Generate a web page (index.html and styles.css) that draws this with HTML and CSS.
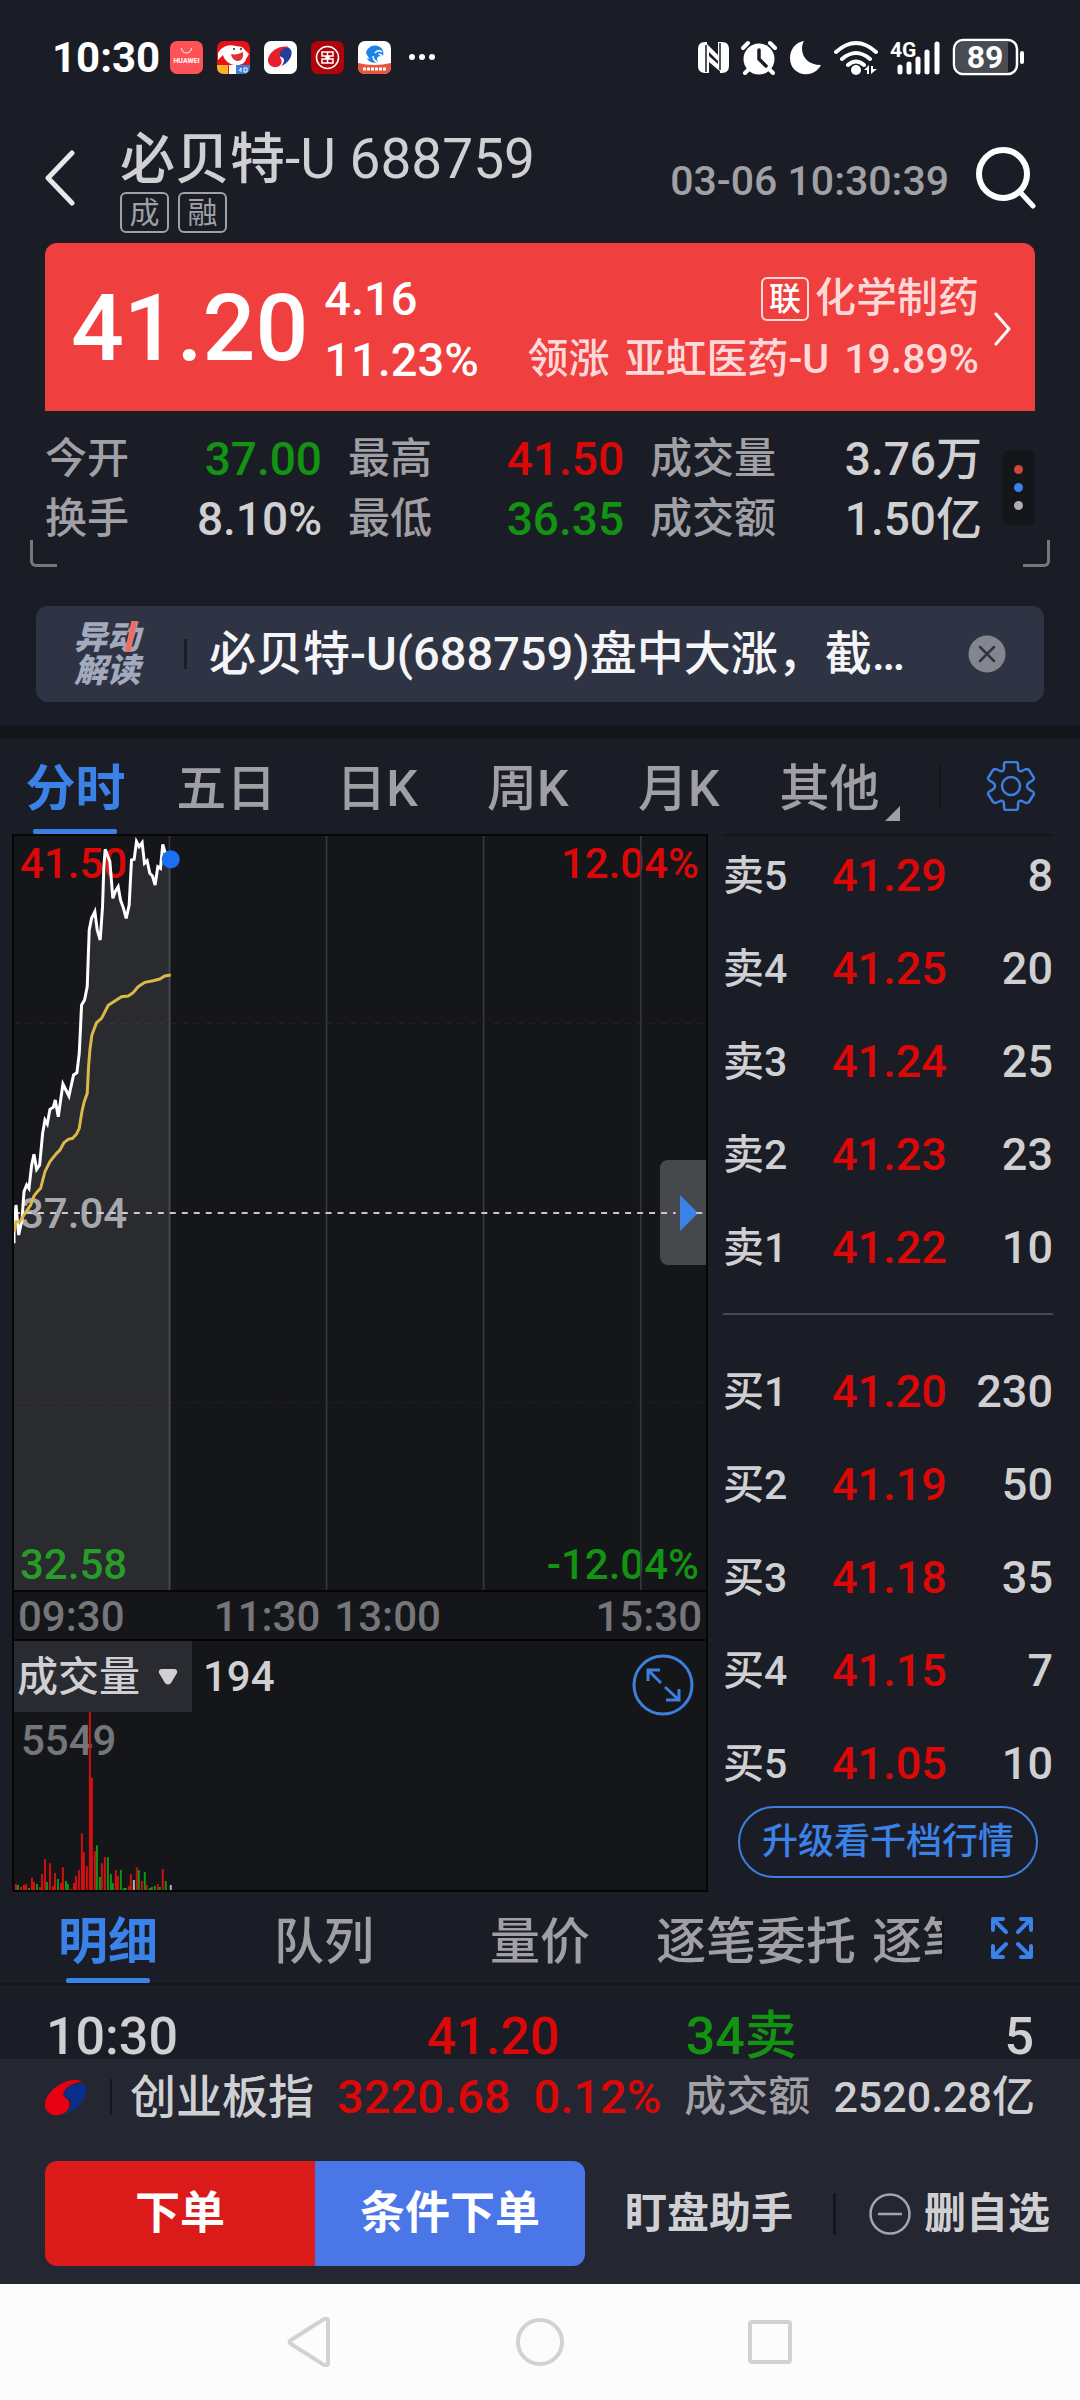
FILE: index.html
```html
<!DOCTYPE html>
<html lang="zh-CN">
<head>
    <meta charset="UTF-8">
    <meta name="viewport" content="width=device-width, initial-scale=1.0">
    <title>必贝特-U 688759</title>
    <link rel="stylesheet" href="styles.css">
</head>
<body>
    <div class="status-bar">
        <span class="clock">10:30</span>
        <div class="app-icons">
            <svg width="33" height="33" viewBox="0 0 33 33">
                <rect width="33" height="33" rx="7" fill="#ff5257"/>
                <path d="M11.500 7a5 5 0 0 0 10 0" fill="none" stroke="#fff" stroke-width="1"/>
                <text x="16.500" y="22" class="huawei-text">HUAWEI</text>
            </svg>
            <svg width="33" height="33" viewBox="0 0 33 33">
                <rect width="33" height="33" rx="7" fill="#e8131a"/>
                <path d="M1 12C5 5 12 3 19 5c4 1 6 0 8 3l5 5-3 5c-1 5-7 7-12 6S7 19 6 14l-5 5z" fill="#fff"/>
                <path d="M14 13c4 1 8 0 12-2 1 6-2 9-5 9s-6-2-7-7z" fill="#d33"/>
                <circle cx="17" cy="8" r="1" fill="#222"/>
                <circle cx="24" cy="8" r="1" fill="#222"/>
                <path d="M0 24h11v9H7q-7 0-7-7z" fill="#f7b22c"/>
                <path d="M12 24h7v9h-7z" fill="#fff"/>
                <path d="M19 24h14v2q0 7-7 7h-7z" fill="#3a7fd9"/>
                <path d="M22 30l2-3v4M27 27h3v4h-3z" fill="none" stroke="#fff"/>
            </svg>
            <svg width="33" height="33" viewBox="0 0 33 33">
                <rect width="33" height="33" rx="7" fill="#fff"/>
                <path d="M25 6C17 4 6 9 4 18c-1 8 9 11 13 5 2-4-1-5-1-8 0-4 5-7 9-9z" fill="#e6202c"/>
                <path d="M16 12c1-4 6-6 9-5 4 2 3 8 0 12-2 3-5 5-8 6 3-3 4-6 2-8-2-1-4-2-3-5z" fill="#21409a"/>
            </svg>
            <svg width="33" height="33" viewBox="0 0 33 33">
                <rect width="33" height="33" rx="7" fill="#b0040c"/>
                <circle cx="16.500" cy="16.500" r="11" fill="none" stroke="#fff" stroke-width="1.500"/>
                <path d="M11 11h11v4h-4v3h4v4H11v-4h4v-3h-4zM16.500 11v11" fill="none" stroke="#fff" stroke-width="1.500"/>
            </svg>
            <svg width="33" height="33" viewBox="0 0 33 33">
                <rect width="33" height="33" rx="7" fill="#fff"/>
                <path d="M0 22q16 4 33 0v4q0 7-7 7H7q-7 0-7-7z" fill="#e8553a"/>
                <path d="M8 12c1-6 8-10 14-6 3 2 4 6 3 9-1-2-3-3-5-2l3 2c-4 0-5 3-3 6-6 2-10-1-11-4l3 1c-2-2-3-4-4-6z" fill="#1c84e8"/>
                <path d="M17 12q3-4 7-1M15 15q0 4 4 6" fill="none" stroke="#fff" stroke-width="1.500"/>
                <path d="M5 28h23" stroke="#fff" stroke-width="3" stroke-dasharray="3 1"/>
            </svg>
        </div>
        <svg class="more-dots" width="28" height="8" viewBox="0 0 28 8" fill="#fff">
            <circle cx="4" cy="4" r="3"/><circle cx="14" cy="4" r="3"/><circle cx="24" cy="4" r="3"/>
        </svg>
        <div class="system-icons">
            <svg width="31" height="33" viewBox="0 0 31 33">
                <path d="M7 1h2v31H7q-7 0-7-7V8q0-7 7-7zM24 32h-2V1h2q7 0 7 7v17q0 7-7 7z" fill="#fff"/>
                <path d="M7 1l13 13v6L11 11v21H8V1zM24 32L11 21v-6l9 8V1h3z" fill="#fff"/>
                <path d="M8 4v27M22 2v27" stroke="#1b1d26" stroke-width="1.500"/>
            </svg>
            <svg width="36" height="35" viewBox="0 0 36 35">
                <circle cx="18" cy="19" r="15.500" fill="#fff"/>
                <path d="M2 8l5-5M34 8l-5-5M8 29l-4 4M28 29l4 4" stroke="#fff" stroke-width="4" stroke-linecap="round"/>
                <path d="M18 10v9l7 7" fill="none" stroke="#1b1d26" stroke-width="3.500" stroke-linecap="round"/>
            </svg>
            <svg width="33" height="35" viewBox="0 0 33 35">
                <path d="M15 1C10 9 14 25 32 25 24 40 1 36 1 18 1 9 7 2 15 1z" fill="#fff"/>
            </svg>
            <svg width="44" height="35" viewBox="0 0 44 35">
                <path d="M2 12q20-18 40 0M8 19q14-12 28 0M14 25q8-7 16 0" fill="none" stroke="#fff" stroke-width="4" stroke-linecap="round"/>
                <circle cx="22" cy="30" r="5" fill="#fff"/>
                <path d="M30 30l5-5v9h-2v-4zM37 26v8l6-5h-4v-3z" fill="#fff"/>
            </svg>
            <svg width="50" height="35" viewBox="0 0 50 35">
                <text x="0" y="17" class="net-text">4G</text>
                <path d="M10 27v5M19 24v8M28 19v13M37 12v20M47 4v28" stroke="#fff" stroke-width="5" stroke-linecap="round"/>
            </svg>
            <svg width="74" height="38" viewBox="0 0 74 38">
                <rect x="2" y="2" width="63" height="34" rx="9" fill="none" stroke="#fff" stroke-width="2.500"/>
                <path d="M11 4h45v30H11q-7 0-7-7V11q0-7 7-7z" fill="#4a4c54"/>
                <path d="M70 15v9" stroke="#fff" stroke-width="4" stroke-linecap="round"/>
                <text x="33" y="30" class="battery-text">89</text>
            </svg>
        </div>
    </div>

    <header class="header">
        <button class="icon-button" aria-label="返回">
            <svg width="30" height="56" viewBox="0 0 30 56">
                <path d="M27 3L3 28l24 25" fill="none" stroke="#e8e8e8" stroke-width="5" stroke-linecap="round" stroke-linejoin="round"/>
            </svg>
        </button>
        <div class="stock">
            <h1>必贝特<span class="code">-U 688759</span></h1>
            <div class="badges">
                <span class="badge">成</span>
                <span class="badge">融</span>
            </div>
        </div>
        <time class="quote-time">03-06 10:30:39</time>
        <button class="icon-button" aria-label="搜索">
            <svg width="60" height="62" viewBox="0 0 60 62">
                <circle cx="27" cy="27" r="24" fill="none" stroke="#fff" stroke-width="6"/>
                <path d="M44 45l13 14" stroke="#fff" stroke-width="5" stroke-linecap="round"/>
            </svg>
        </button>
    </header>

    <section class="price-card">
        <span class="price">41.20</span>
        <div class="change">
            <span>4.16</span>
            <span>11.23%</span>
        </div>
        <a class="sector" href="#">
            <span class="sector-line"><span class="sector-badge">联</span>化学制药</span>
            <span class="sector-line sector-lead"><span>领涨</span><span>亚虹医药-U</span><span>19.89%</span></span>
        </a>
        <svg width="18" height="34" viewBox="0 0 18 34">
            <path d="M2 2l13 15L2 32" fill="none" stroke="#fff" stroke-width="3" stroke-linecap="round" stroke-linejoin="round"/>
        </svg>
    </section>

    <section class="stats">
        <dl class="stat-grid">
            <dt>今开</dt><dd class="down">37.00</dd>
            <dt>最高</dt><dd class="up">41.50</dd>
            <dt>成交量</dt><dd>3.76万</dd>
            <dt>换手</dt><dd>8.10%</dd>
            <dt>最低</dt><dd class="down">36.35</dd>
            <dt>成交额</dt><dd>1.50亿</dd>
        </dl>
        <button class="more-button" aria-label="更多">
            <i class="dot dot-red"></i>
            <i class="dot dot-blue"></i>
            <i class="dot dot-grey"></i>
        </button>
    </section>
    <div class="corners"><i class="corner corner-left"></i><i class="corner corner-right"></i></div>

    <section class="notice">
        <span class="notice-logo">异动<br>解读<i class="notice-slash"></i></span>
        <span class="notice-text">必贝特-U(688759)盘中大涨，截…</span>
        <button class="icon-button" aria-label="关闭">
            <svg width="38" height="38" viewBox="0 0 38 38">
                <circle cx="19" cy="19" r="18.500" fill="#83868e"/>
                <path d="M12 12l14 14M26 12L12 26" stroke="#2f3444" stroke-width="2.500" stroke-linecap="round"/>
            </svg>
        </button>
    </section>

    <nav class="period-tabs">
        <button class="tab active">分时</button>
        <button class="tab">五日</button>
        <button class="tab">日K</button>
        <button class="tab">周K</button>
        <button class="tab">月K</button>
        <button class="tab tab-more">其他</button>
        <button class="tool-button" aria-label="设置">
            <svg width="50" height="50" viewBox="0 0 50 50" fill="none" stroke="#3d7fdc" stroke-width="2.500" stroke-linejoin="round">
                <path d="M20 1h10q2 0 2 3v3q0 4 4 3l4-2q2 0 3 1l5 8q0 2-2 3-5 2-5 5t5 5q2 1 2 3l-5 8q-1 1-3 1l-4-2q-4-1-4 3v3q0 3-2 3H20q-2 0-2-3v-3q0-4-4-3l-4 2q-2 0-3-1l-5-8q0-2 2-3 5-2 5-5t-5-5q-2-1-2-3l5-8q1-1 3-1l4 2q4 1 4-3V4q0-3 2-3z"/>
                <circle cx="25" cy="25" r="9"/>
            </svg>
        </button>
    </nav>

    <main class="market">
        <div class="charts">
            <div class="price-chart">
                <span class="mark mark-high up">41.50</span>
                <span class="mark mark-high-rate up">12.04%</span>
                <span class="mark mark-mid">37.04</span>
                <span class="mark mark-low down">32.58</span>
                <span class="mark mark-low-rate down">-12.04%</span>
                <button class="side-handle" aria-label="收起盘口">
                    <svg width="18" height="36" viewBox="0 0 18 36"><path d="M0 0l18 18L0 36z" fill="#3b82e8"/></svg>
                </button>
                <svg class="plot" viewBox="42 48 2079 2262" preserveAspectRatio="none">
                    <path d="M509 48V2310M981 48V2310M1453 48V2310M1925 48V2310" stroke="#363741" stroke-width="5"/>
                    <path d="M42 610H2121M42 1748H2121" stroke="#232429" stroke-width="3" stroke-dasharray="18 18"/>
                    <path d="M42 1179H2030M2092 1179H2110" stroke="#c8c8ca" stroke-width="6" stroke-dasharray="18 18"/>
                    <path class="plot-area" d="M42 1270L48 1155 56 1245 66 1200 72 1115 80 1095 87 1105 95 1035 102 1003 110 1048 119 1035 128 940 135 900 142 912 150 868 160 862 166 840 175 890 189 792 207 828 221 765 231 758 238 700 241 640 245 555 254 540 262 500 268 330 275 295 285 275 292 330 301 360 308 260 312 140 316 88 330 125 339 235 346 215 355 200 362 240 371 265 379 295 388 255 395 120 403 118 410 65 418 80 427 68 434 130 442 122 450 160 458 168 466 195 474 140 482 145 489 73 495 95 513 118V2310H42z"/>
                    <polyline class="plot-price" points="42,1270 42,1235 48,1155 56,1245 66,1200 72,1115 80,1095 87,1105 95,1035 102,1003 110,1048 119,1035 128,940 135,900 142,912 150,868 160,862 166,840 175,890 189,792 207,828 221,765 231,758 238,700 241,640 245,555 254,540 262,500 268,330 275,295 285,275 292,330 301,360 308,260 312,140 316,88 330,125 339,235 346,215 355,200 362,240 371,265 379,295 388,255 395,120 403,118 410,65 418,80 427,68 434,130 442,122 450,160 458,168 466,195 474,140 482,145 489,73 495,95 513,118"/>
                    <polyline class="plot-average" points="42,1235 48,1205 60,1205 75,1180 92,1155 102,1128 112,1115 122,1105 135,1055 150,1025 170,1000 180,990 192,968 205,958 218,955 230,942 238,925 246,875 253,845 262,820 266,740 270,690 276,645 290,608 305,595 325,556 345,543 365,530 385,528 400,518 415,500 435,487 460,482 480,477 495,468 513,465"/>
                    <circle cx="513" cy="118" r="27" fill="#1b6ff5"/>
                </svg>
            </div>
            <div class="time-axis">
                <span>09:30</span>
                <span class="axis-mid"><span>11:30</span><span>13:00</span></span>
                <span>15:30</span>
            </div>
            <div class="volume-chart">
                <div class="volume-head">
                    <div class="select-wrap">
                        <select class="indicator" aria-label="指标">
                            <option>成交量</option>
                        </select>
                        <svg class="select-arrow" width="20" height="17" viewBox="0 0 20 17">
                            <path d="M3 1h14q3 1 2 4l-6 10q-3 3-6 0L1 5q-1-3 2-4z" fill="#d0d0d2"/>
                        </svg>
                    </div>
                    <span class="volume-now">194</span>
                    <button class="icon-button" aria-label="放大">
                        <svg width="62" height="62" viewBox="0 0 62 62" fill="none" stroke="#3d7fdc" stroke-width="3">
                            <circle cx="31" cy="31" r="29"/>
                            <path d="M16 27V16h12M16 16l13 13M47 35v11H34M47 46L33 33"/>
                        </svg>
                    </button>
                </div>
                <span class="volume-max">5549</span>
                <svg class="bars" viewBox="0 0 693 179" preserveAspectRatio="none" stroke-width="2">
                    <path stroke="#d01010" d="M2 179v-6M7 179v-3M10 179v-5M12 179v-6M18 179v-12M20 179v-8M26 179v-3M28 179v-16M31 179v-31M36 179v-27M39 179v-4M41 179v-17M47 179v-7M49 179v-23M57 179v-1M60 179v-7M62 179v-14M65 179v-20M68 179v-57M70 179v-38M73 179v-24M76 179v-179M78 179v-113M81 179v-39M88 179v-27M91 179v-33M102 179v-20M104 179v-14M115 179v-4M117 179v-16M123 179v-23M128 179v-9M133 179v-5M144 179v-6M149 179v-21"/>
                    <path stroke="#129312" d="M4 179v-5M15 179v-2M23 179v-6M33 179v-8M44 179v-11M52 179v-9M54 179v-6M83 179v-45M86 179v-13M94 179v-33M97 179v-16M99 179v-7M107 179v-20M110 179v-2M112 179v-2M125 179v-20M131 179v-18M136 179v-2M138 179v-3M141 179v-4M146 179v-3M152 179v-9"/>
                    <path stroke="#b4b4b8" d="M120 179v-10M157 179v-5"/>
                </svg>
            </div>
        </div>

        <aside class="book">
            <table class="orders">
                <tr><th>卖5</th><td class="up">41.29</td><td>8</td></tr>
                <tr><th>卖4</th><td class="up">41.25</td><td>20</td></tr>
                <tr><th>卖3</th><td class="up">41.24</td><td>25</td></tr>
                <tr><th>卖2</th><td class="up">41.23</td><td>23</td></tr>
                <tr><th>卖1</th><td class="up">41.22</td><td>10</td></tr>
            </table>
            <table class="orders orders-buy">
                <tr><th>买1</th><td class="up">41.20</td><td>230</td></tr>
                <tr><th>买2</th><td class="up">41.19</td><td>50</td></tr>
                <tr><th>买3</th><td class="up">41.18</td><td>35</td></tr>
                <tr><th>买4</th><td class="up">41.15</td><td>7</td></tr>
                <tr><th>买5</th><td class="up">41.05</td><td>10</td></tr>
            </table>
            <button class="upgrade">升级看千档行情</button>
        </aside>
    </main>

    <nav class="detail-tabs">
        <div class="detail-scroll">
            <button class="tab active">明细</button>
            <button class="tab">队列</button>
            <button class="tab">量价</button>
            <button class="tab">逐笔委托</button>
            <button class="tab">逐笔成交</button>
        </div>
        <button class="tool-button" aria-label="全屏">
            <svg width="44" height="44" viewBox="0 0 44 44" fill="none" stroke="#3b82e8" stroke-width="4" stroke-linecap="round" stroke-linejoin="round">
                <path d="M3 14V3h10M4 4l12 12M31 3h10v11M40 4L28 16M3 30v11h10M4 40l12-12M41 30v11H31M40 40L28 28"/>
            </svg>
        </button>
    </nav>

    <div class="ticks">
        <span>10:30</span>
        <span class="up">41.20</span>
        <span class="down">34卖</span>
        <span>5</span>
    </div>

    <footer class="footer">
        <div class="index-row">
            <svg width="42" height="38" viewBox="0 0 42 38">
                <path d="M38 4C26-3 4 9 0 24c-2 10 8 16 17 12 9-3 9-12 5-15-4-2-5-6-1-10 4-5 11-7 17-7z" fill="#e60012"/>
                <path d="M40 7c4 8-2 22-20 30 6-7 8-13 4-16-4-2-6-3-5-6 3-8 16-12 21-8z" fill="#0a2d8c"/>
            </svg>
            <span class="index-name">创业板指</span>
            <span class="index-value up">3220.68</span>
            <span class="index-value up">0.12%</span>
            <span class="index-label">成交额</span>
            <span class="index-amount">2520.28亿</span>
        </div>
        <div class="actions">
            <button class="order-button">下单</button>
            <button class="order-button order-cond">条件下单</button>
            <button class="text-button">盯盘助手</button>
            <button class="text-button text-button-last">
                <svg width="42" height="42" viewBox="0 0 42 42" fill="none" stroke="#a5a5aa" stroke-width="2.500">
                    <circle cx="21" cy="21" r="19.500"/><path d="M9 21h24"/>
                </svg>
                删自选
            </button>
        </div>
    </footer>

    <div class="nav-bar">
        <button class="icon-button" aria-label="返回">
            <svg width="46" height="50" viewBox="0 0 46 50"><path d="M41 3v44q-1 2-4 1L4 27q-3-2 0-4L37 2q3-1 4 1z" fill="none" stroke="#d2d2d2" stroke-width="4"/></svg>
        </button>
        <button class="icon-button" aria-label="主页">
            <svg width="50" height="50" viewBox="0 0 50 50"><circle cx="25" cy="25" r="22" fill="none" stroke="#d2d2d2" stroke-width="4"/></svg>
        </button>
        <button class="icon-button" aria-label="最近任务">
            <svg width="46" height="46" viewBox="0 0 46 46"><rect x="3" y="3" width="40" height="40" rx="2" fill="none" stroke="#d2d2d2" stroke-width="4"/></svg>
        </button>
    </div>
</body>
</html>
```
FILE: styles.css
```css
* {
    margin: 0;
    padding: 0;
    box-sizing: border-box;
}
body {
    display: flex;
    flex-direction: column;
    height: 100vh;
    background: #1b1d26;
    color: #d0d0d2;
    font-family: Roboto, "Noto Sans CJK SC", sans-serif;
    font-weight: 500;
    overflow: hidden;
}
button, select {
    background: none;
    border: none;
    color: inherit;
    font: inherit;
    cursor: pointer;
}
svg {
    display: block;
    flex-shrink: 0;
}
a {
    color: inherit;
    text-decoration: none;
}
.icon-button {
    flex-shrink: 0;
}
.up {
    color: #dc0808;
}
.down {
    color: #129312;
}

/* status bar */
.status-bar {
    display: flex;
    align-items: center;
    height: 114px;
    padding: 0 54px 0 52px;
    color: #fff;
}
.clock {
    font-size: 42px;
    font-weight: 700;
}
.app-icons {
    display: flex;
    gap: 14px;
    margin-left: 10px;
}
.more-dots {
    margin-left: 17px;
}
.system-icons {
    display: flex;
    align-items: center;
    gap: 12px;
    margin-left: auto;
}
.huawei-text {
    font-size: 7px;
    font-weight: 700;
    fill: #fff;
    text-anchor: middle;
}
.net-text {
    font-size: 21px;
    font-weight: 700;
    fill: #fff;
}
.battery-text {
    font-size: 32px;
    font-weight: 700;
    fill: #fff;
    text-anchor: middle;
}

/* header */
.header {
    display: flex;
    align-items: center;
    padding: 15px 44px 10px 45px;
}
.header .icon-button {
    padding-bottom: 6px;
}
.stock {
    margin-left: 45px;
}
.stock h1 {
    font-size: 55px;
    font-weight: 500;
    line-height: 60px;
}
.code {
    font-weight: 400;
}
.badges {
    display: flex;
    gap: 9px;
    margin-top: 3px;
}
.badge {
    width: 49px;
    height: 41px;
    border: 2px solid #a0a0a5;
    border-radius: 6px;
    color: #a0a0a5;
    font-size: 30px;
    font-weight: 400;
    line-height: 37px;
    text-align: center;
}
.quote-time {
    margin: 0 27px 0 auto;
    color: #a0a0a5;
    font-size: 41px;
}

/* price card */
.price-card {
    display: flex;
    align-items: center;
    height: 168px;
    margin: 0 45px;
    padding: 4px 23px 0 26px;
    background: #ef403f;
    border-radius: 12px 12px 0 0;
    color: #fff;
}
.price {
    font-size: 93px;
    line-height: 100px;
}
.change {
    display: flex;
    flex-direction: column;
    margin-left: 16px;
    font-size: 47px;
    line-height: 61px;
}
.sector {
    margin: 0 15px 0 auto;
    color: #ffd9d9;
    font-size: 41px;
    line-height: 61px;
}
.sector-line {
    display: flex;
    align-items: center;
    justify-content: flex-end;
}
.sector-lead {
    gap: 15px;
}
.sector-badge {
    width: 48px;
    height: 44px;
    margin-right: 6px;
    border: 2px solid #ffd9d9;
    border-radius: 6px;
    color: #fff;
    font-size: 32px;
    line-height: 40px;
    text-align: center;
}

/* stats */
.stats {
    display: flex;
    align-items: center;
    gap: 20px;
    padding: 18px 45px 0;
}
.stat-grid {
    display: grid;
    flex: 1;
    grid-template-columns: auto 193px auto 192px auto 1fr;
    font-size: 46px;
    line-height: 60px;
}
.stat-grid dt {
    padding-left: 26px;
    color: #a0a0a5;
    font-size: 42px;
}
.stat-grid dt:nth-of-type(3n + 1) {
    padding-left: 0;
}
.stat-grid dd {
    text-align: right;
}
.more-button {
    display: flex;
    flex-direction: column;
    align-items: center;
    justify-content: center;
    gap: 9px;
    width: 33px;
    height: 75px;
    margin-bottom: 4px;
    background: #15161a;
    border-radius: 6px;
}
.dot {
    width: 9px;
    height: 9px;
    border-radius: 50%;
}
.dot-red {
    background: #c94a38;
}
.dot-blue {
    background: #3b82e8;
}
.dot-grey {
    background: #b0b0b4;
}
.corners {
    display: flex;
    justify-content: space-between;
    margin: -9px 30px 0;
}
.corner {
    width: 27px;
    height: 27px;
    border-bottom: 3px solid #77787c;
}
.corner-left {
    border-left: 3px solid #77787c;
    border-bottom-left-radius: 6px;
}
.corner-right {
    border-right: 3px solid #77787c;
    border-bottom-right-radius: 6px;
}

/* notice */
.notice {
    display: flex;
    align-items: center;
    height: 96px;
    margin: 39px 36px 24px;
    padding: 0 38px 0 38px;
    background: #2f3444;
    border-radius: 12px;
}
.notice-logo {
    position: relative;
    padding-right: 2px;
    color: #a3aabd;
    font-size: 33px;
    font-style: italic;
    font-weight: 900;
    line-height: 33px;
}
.notice-slash {
    position: absolute;
    top: 0;
    right: 8px;
    width: 6px;
    height: 31px;
    background: #ec6f66;
    transform: skewX(-12deg);
}
.notice-text {
    flex: 1;
    margin-left: 42px;
    padding-left: 25px;
    background: linear-gradient(#1b1d26, #1b1d26) left center / 3px 30px no-repeat;
    color: #f5f5f7;
    font-size: 47px;
    line-height: 60px;
    white-space: nowrap;
}

/* tabs */
.period-tabs {
    display: flex;
    align-items: flex-end;
    height: 108px;
    padding-right: 44px;
    border-top: 12px solid #15161a;
}
.tab {
    position: relative;
    flex: 1;
    color: #a0a0a4;
    font-size: 50px;
    line-height: 90px;
    white-space: nowrap;
}
.tab.active {
    color: #3b82e8;
    font-weight: 700;
}
.tab.active::after {
    content: "";
    position: absolute;
    bottom: 0;
    left: 50%;
    width: 84px;
    height: 5px;
    margin-left: -42px;
    background: #3b82e8;
    border-radius: 2px;
}
.tab-more::after {
    content: "";
    position: absolute;
    right: 5px;
    bottom: 13px;
    border-bottom: 15px solid #a0a0a4;
    border-left: 15px solid transparent;
}
.tool-button {
    display: flex;
    align-items: center;
    height: 45px;
    margin-bottom: 26px;
    padding-left: 45px;
    border-left: 2px solid #15161a;
}
.period-tabs .tool-button {
    margin-left: 34px;
}

/* charts + order book */
.market {
    display: grid;
    grid-template-columns: minmax(0, 1fr) 330px;
    gap: 15px;
    padding: 0 27px 0 12px;
}
.charts {
    background: #15161a;
    border: 2px solid #050507;
}
.price-chart {
    position: relative;
    height: 754px;
}
.plot {
    position: relative;
    width: 100%;
    height: 100%;
    pointer-events: none;
}
.plot-area {
    fill: rgba(255, 255, 255, 0.09);
}
.plot-price {
    fill: none;
    stroke: #fff;
    stroke-width: 9;
}
.plot-average {
    fill: none;
    stroke: #dcb74a;
    stroke-width: 9;
}
.mark {
    position: absolute;
    font-size: 42px;
    line-height: 50px;
}
.mark-high {
    top: 3px;
    left: 6px;
}
.mark-high-rate {
    top: 3px;
    right: 7px;
}
.mark-mid {
    top: 353px;
    left: 6px;
    color: #a0a0a4;
}
.mark-low {
    bottom: 0;
    left: 6px;
}
.mark-low-rate {
    right: 7px;
    bottom: 0;
}
.side-handle {
    position: absolute;
    top: 324px;
    right: 0;
    width: 46px;
    height: 105px;
    padding-left: 20px;
    background: #47484c;
    border-radius: 8px 0 0 8px;
}
.time-axis {
    display: grid;
    grid-template-columns: 3fr auto 4fr;
    height: 51px;
    padding: 0 4px;
    border: 2px solid #050507;
    border-width: 2px 0;
    color: #75767a;
    font-size: 42px;
    line-height: 50px;
}
.time-axis > :last-child {
    text-align: right;
}
.axis-mid {
    display: flex;
    gap: 14px;
}
.volume-chart {
    position: relative;
    height: 249px;
}
.volume-head {
    display: flex;
    height: 71px;
    padding-right: 12px;
}
.select-wrap {
    position: relative;
    width: 178px;
    background: #2a2b30;
}
.indicator {
    width: 100%;
    height: 71px;
    padding-left: 3px;
    appearance: none;
    font-size: 41px;
}
.select-arrow {
    position: absolute;
    top: 27px;
    right: 14px;
    pointer-events: none;
}
.volume-now {
    flex: 1;
    margin-left: 11px;
    font-size: 42px;
    line-height: 71px;
}
.volume-head .icon-button {
    align-self: flex-end;
    height: 58px;
}
.volume-max {
    position: absolute;
    top: 75px;
    left: 7px;
    color: #75767a;
    font-size: 42px;
    line-height: 50px;
}
.bars {
    position: relative;
    width: 100%;
    height: 178px;
}
.book {
    padding-top: 10px;
    border-top: 2px solid #15161a;
}
.orders {
    width: 100%;
    border-collapse: collapse;
    font-size: 45px;
    line-height: 60px;
}
.orders th {
    width: 109px;
    font-size: 41px;
    font-weight: 500;
    text-align: left;
}
.orders td:last-child {
    text-align: right;
}
.orders tr + tr > * {
    padding-top: 33px;
}
.orders-buy {
    margin-top: 35px;
    border-top: 2px solid #46495a;
}
.orders-buy tr:first-child > * {
    padding-top: 47px;
}
.upgrade {
    display: block;
    width: 300px;
    height: 72px;
    margin: 12px auto 0;
    border: 2px solid #3d7fdc;
    border-radius: 36px;
    color: #3b82e8;
    font-size: 36px;
    line-height: 68px;
}

/* detail tabs and list */
.detail-tabs {
    display: flex;
    align-items: flex-end;
    height: 93px;
    padding-right: 46px;
    border-bottom: 2px solid #15161a;
}
.detail-scroll {
    display: flex;
    flex: 1;
    min-width: 0;
    overflow: hidden;
}
.detail-scroll .tab {
    flex: 0 0 20vw;
    line-height: 82px;
}
.detail-tabs .tool-button {
    margin-bottom: 23px;
    padding-left: 46px;
}
.ticks {
    display: grid;
    flex: 1;
    grid-template-columns: 26fr 26fr 24fr 24fr;
    min-height: 0;
    padding: 20px 46px 0;
    font-size: 52px;
    line-height: 64px;
    overflow: hidden;
}
.ticks > :not(:first-child) {
    text-align: right;
}

/* footer */
.footer {
    padding: 6px 45px 18px;
    background: #242632;
}
.index-row {
    display: flex;
    align-items: center;
    justify-content: space-between;
    height: 64px;
    line-height: 60px;
}
.index-name {
    padding-left: 20px;
    background: linear-gradient(#15161a, #15161a) left center / 2px 36px no-repeat;
    font-size: 46px;
}
.index-value {
    font-size: 47px;
}
.index-label {
    color: #a0a0a5;
    font-size: 42px;
}
.index-amount {
    font-size: 43px;
}
.actions {
    display: flex;
    height: 105px;
    margin: 32px -15px 0 0;
    line-height: 60px;
}
.order-button {
    flex: 0 0 25vw;
    background: #db1b1a;
    border-radius: 12px 0 0 12px;
    color: #fff;
    font-size: 45px;
    font-weight: 700;
}
.order-cond {
    background: #4b76e8;
    border-radius: 0 12px 12px 0;
}
.text-button {
    display: flex;
    flex: 1;
    align-items: center;
    justify-content: center;
    font-size: 42px;
    font-weight: 700;
    white-space: nowrap;
}
.text-button-last {
    flex: none;
    gap: 13px;
    padding-left: 36px;
    background: linear-gradient(#15161a, #15161a) left center / 3px 42px no-repeat;
}

/* navigation bar */
.nav-bar {
    display: flex;
    align-items: center;
    justify-content: center;
    gap: 182px;
    height: 116px;
    background: #fcfcfc;
}
```
